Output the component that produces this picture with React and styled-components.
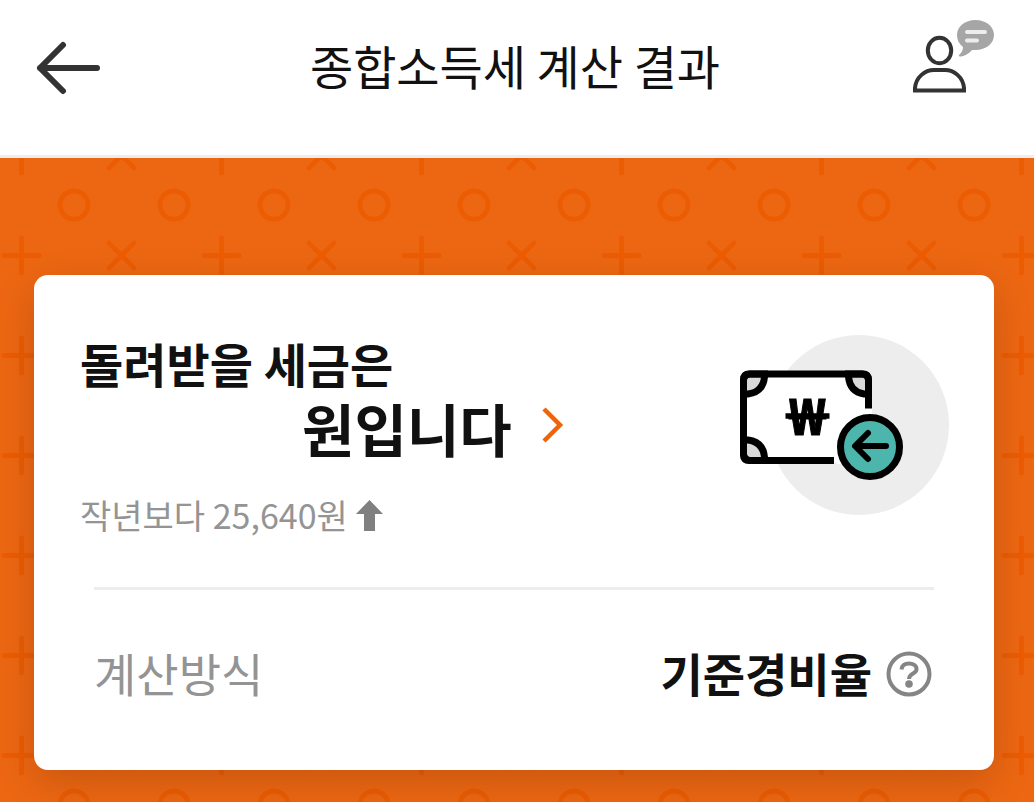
import React from 'react';
import styled, { createGlobalStyle } from 'styled-components';

const patternTile = encodeURIComponent(
    `<svg xmlns="http://www.w3.org/2000/svg" width="200" height="100" fill="none" stroke="#ec5a00" stroke-opacity="0.85" stroke-width="5" stroke-linecap="round">
        <circle cx="74" cy="25" r="14"/>
        <circle cx="174" cy="25" r="14"/>
        <path d="M4 75.5H39M21.5 58V93"/>
        <path d="M109 63L134 88M134 63L109 88"/>
    </svg>`
);

function BackIcon() {
    return (
        <svg width="64" height="54" viewBox="0 0 64 54" fill="none" stroke="#333333" strokeWidth="6" strokeLinecap="round" strokeLinejoin="round" aria-hidden="true">
            <path d="M61 27H4M27 4L4 27L27 50" />
        </svg>
    );
}

function CounselIcon() {
    return (
        <svg width="82" height="74" viewBox="0 0 82 74" fill="none" aria-hidden="true">
            <ellipse cx="27.5" cy="30.5" rx="11.7" ry="12.7" stroke="#333333" strokeWidth="4" />
            <path d="M3 70.500V68C4 57 13 50 22 50H33C42 50 51 57 52 68V70.500Z" stroke="#333333" strokeWidth="4" />
            <path d="M63.500 0C74 0 82 6.500 82 15S74 30 63.500 30H60C56.500 34 52 36.500 48 36.500C46.500 36.500 46.500 35.500 47.500 34.500C49.500 32.500 51 30 51 27C47 24 45 20 45 15C45 6.500 53 0 63.500 0Z" fill="#a6a6a6" />
            <path d="M55 12H73M55 20.500H65" stroke="#ededed" strokeWidth="4" strokeLinecap="round" />
        </svg>
    );
}

function RefundIcon() {
    return (
        <svg width="210" height="180" viewBox="0 0 210 180" fill="none" aria-hidden="true">
            <circle cx="119" cy="90" r="90" fill="#ededed" />
            <path d="M9.500 39H122.500Q128.500 39 128.500 45V73.500H132V80L94 129H9.500Q3.500 125.500 3.500 119.500V45Q3.500 39 9.500 39Z" fill="#ffffff" />
            <circle cx="130" cy="112" r="37" fill="#ffffff" clipPath="url(#billArea)" />
            <clipPath id="billArea">
                <path d="M0 36H132V129H0Z" />
            </clipPath>
            <g fill="#d9d9d9" stroke="#000000" strokeWidth="7">
                <path d="M24.500 39V42Q23 57 8 59H3.500V45Q4 39 10 39Z" />
                <path d="M108.500 39V42Q110 57 124 59H128.500V45Q128 39 122 39Z" />
                <path d="M3.500 105H8Q23 107 24.500 122V125.500H10Q4 125 3.500 119Z" />
            </g>
            <path d="M128.500 73.500V45Q128.500 39 122.500 39H9.500Q3.500 39 3.500 45V119.500Q3.500 125.500 9.500 125.500H94" stroke="#000000" strokeWidth="7" />
            <WonSign x="67.500" y="100" textAnchor="middle">₩</WonSign>
            <path d="M45.500 81H89.500" stroke="#000000" strokeWidth="5.5" />
            <circle cx="130" cy="112" r="29.500" fill="#4db6ac" stroke="#000000" strokeWidth="7" />
            <path d="M146 111H115.500M128 98L115 111L128 124" stroke="#000000" strokeWidth="6" strokeLinecap="round" strokeLinejoin="round" />
        </svg>
    );
}

function ChevronIcon() {
    return (
        <svg width="22" height="36" viewBox="0 0 22 36" fill="none" stroke="#ed6409" strokeWidth="4.5" aria-hidden="true">
            <path d="M2 2L18 18L2 34" />
        </svg>
    );
}

function ArrowUpIcon() {
    return (
        <svg width="27" height="31" viewBox="0 0 27 31" fill="#808080" aria-hidden="true">
            <path d="M13.500 0L27 14H19V31H8V14H0Z" />
        </svg>
    );
}

function HelpIcon() {
    return (
        <svg width="46" height="46" viewBox="0 0 46 46" fill="none" stroke="#858585" aria-hidden="true">
            <circle cx="23" cy="23" r="20.500" strokeWidth="4" />
            <path d="M15.500 18.500C16 14 19 12.500 23 12.500C27 12.500 30.500 14.500 30.500 18.200C30.500 23 23 22 23 28" strokeWidth="4" />
            <circle cx="23" cy="33" r="3.800" fill="#858585" stroke="none" />
        </svg>
    );
}

function App() {
    return (
        <Page>
            <GlobalStyle />
            <Header>
                <IconButton type="button" aria-label="뒤로">
                    <BackIcon />
                </IconButton>
                <HeaderTitle>종합소득세 계산 결과</HeaderTitle>
                <CounselButton type="button" aria-label="상담">
                    <CounselIcon />
                </CounselButton>
            </Header>
            <Content>
                <ResultCard>
                    <Summary>
                        <div>
                            <RefundLabel>돌려받을 세금은</RefundLabel>
                            <RefundAmount>
                                <AmountSlot />
                                원입니다
                                <DetailButton type="button" aria-label="자세히 보기">
                                    <ChevronIcon />
                                </DetailButton>
                            </RefundAmount>
                            <Comparison>
                                작년보다 25,640원
                                <ArrowUpIcon />
                            </Comparison>
                        </div>
                        <RefundIcon />
                    </Summary>
                    <Divider />
                    <MethodRow>
                        <MethodLabel>계산방식</MethodLabel>
                        <MethodValue>
                            기준경비율
                            <HelpButton type="button" aria-label="도움말">
                                <HelpIcon />
                            </HelpButton>
                        </MethodValue>
                    </MethodRow>
                </ResultCard>
            </Content>
        </Page>
    );
}

const GlobalStyle = createGlobalStyle`
  * {
    box-sizing: border-box;
  }

  body {
    margin: 0;
    background-color: #ffffff;
    color: #111111;
    font-family: 'Noto Sans CJK KR', sans-serif;
  }
`;

const Page = styled.div`
  display: flex;
  flex-direction: column;
  min-height: 100vh;
`;

const Header = styled.header`
  display: grid;
  grid-template-columns: 1fr auto 1fr;
  align-items: center;
  padding: 20px 40px 40px 36px;
  border-bottom: 3px solid #ededed;
`;

const IconButton = styled.button`
  display: flex;
  justify-self: start;
  padding: 0;
  border: none;
  background: none;
  cursor: pointer;
`;

const CounselButton = styled(IconButton)`
  justify-self: end;
  align-self: start;
`;

const DetailButton = styled(IconButton)`
  margin: 0 0 4px 30px;
`;

const HelpButton = styled(IconButton)`
  margin-top: 4px;
`;

const HeaderTitle = styled.h1`
  margin: 0;
  padding-bottom: 6px;
  font-size: 47px;
  font-weight: 400;
  line-height: 89px;
`;

const Content = styled.main`
  flex: 1;
  padding: 117px 40px 32px 34px;
  background: #ed6712 url("data:image/svg+xml,${patternTile}") 0 22px;
`;

const ResultCard = styled.section`
  border-radius: 14px;
  background-color: #ffffff;
  box-shadow: 0 12px 40px rgba(0, 0, 0, 0.16);
`;

const Summary = styled.div`
  display: flex;
  justify-content: space-between;
  align-items: flex-start;
  padding: 60px 44px 48px 46px;
`;

const RefundLabel = styled.h2`
  margin: 0;
  font-size: 47px;
  font-weight: 700;
  line-height: 56px;
`;

const RefundAmount = styled.div`
  display: flex;
  align-items: center;
  font-size: 57px;
  font-weight: 700;
  line-height: 72px;
`;

const AmountSlot = styled.span`
  width: 222px;
`;

const Comparison = styled.p`
  display: flex;
  align-items: center;
  gap: 8px;
  margin: 28px 0 0;
  color: #949494;
  font-size: 34px;
  line-height: 48px;
`;

const Divider = styled.hr`
  height: 3px;
  margin: 0 60px;
  border: none;
  background-color: #ededed;
`;

const MethodRow = styled.div`
  display: flex;
  justify-content: space-between;
  align-items: center;
  padding: 50px 62px 66px 60px;
  font-size: 46px;
  line-height: 64px;
`;

const MethodLabel = styled.span`
  color: #949494;
`;

const MethodValue = styled.div`
  display: flex;
  align-items: center;
  gap: 14px;
  font-weight: 700;
`;

const WonSign = styled.text`
  fill: #000000;
  stroke: #000000;
  stroke-width: 1px;
  font-family: 'Noto Sans', sans-serif;
  font-size: 50px;
  font-weight: 800;
`;

export default App;
